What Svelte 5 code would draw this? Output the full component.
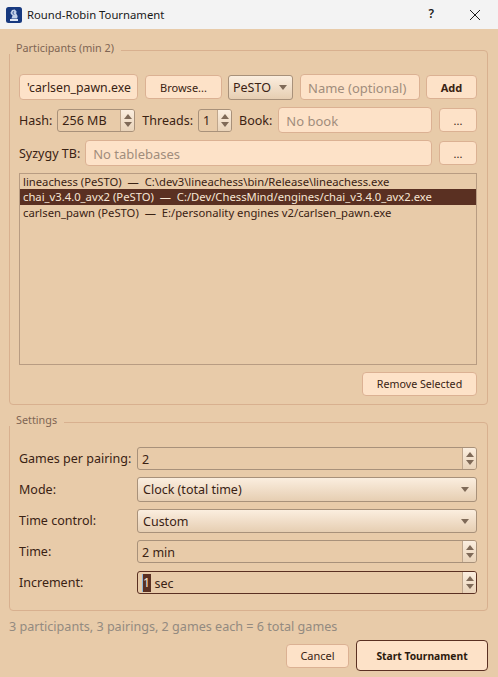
<script>
  const engines = [
    { name: 'lineachess (PeSTO)', path: 'C:\\dev3\\lineachess\\bin/Release\\lineachess.exe' },
    { name: 'chai_v3.4.0_avx2 (PeSTO)', path: 'C:/Dev/ChessMind/engines/chai_v3.4.0_avx2.exe', selected: true },
    { name: 'carlsen_pawn (PeSTO)', path: 'E:/personality engines v2/carlsen_pawn.exe' }
  ];
</script>

{#snippet arrows()}
  <span class="arrows">
    <span class="up"></span>
    <span class="down"></span>
  </span>
{/snippet}

<div class="window">
  <header class="titlebar">
    <svg class="appicon" viewBox="0 0 16 16" width="16" height="16">
      <rect width="16" height="16" rx="2.5" fill="#17397f" />
      <path d="M6 3 8.8 2.4 10.6 4.4 10.2 6.4 11.6 9 11.2 11.4 5.4 11.4 6.6 8.6 5.4 7.6 4.4 6 Z" fill="#c3d1e8" />
      <path d="M7.8 4.2 6.8 6 8.2 7.8" fill="none" stroke="#17397f" stroke-width=".8" />
      <path d="M4 12H12V14H4Z" fill="#dfe7f3" />
    </svg>
    <span class="title">Round-Robin Tournament</span>
    <span class="help">?</span>
    <svg class="close" viewBox="0 0 10 10" width="10" height="10">
      <path d="M0 0 10 10M10 0 0 10" stroke="#1c1c1c" stroke-width="1" fill="none" />
    </svg>
  </header>

  <main class="content">
    <section class="group participants">
      <h2 class="legend">Participants (min 2)</h2>

      <div class="row first">
        <div class="field path">'carlsen_pawn.exe</div>
        <button class="btn browse">Browse...</button>
        <div class="combo small"><span>PeSTO</span><span class="caret"></span></div>
        <div class="field name placeholder">Name (optional)</div>
        <button class="btn add">Add</button>
      </div>

      <div class="row second">
        <span class="label">Hash:</span>
        <div class="spin hash"><span class="val">256 MB</span>{@render arrows()}</div>
        <span class="label threads">Threads:</span>
        <div class="spin thr"><span class="val">1</span>{@render arrows()}</div>
        <span class="label book">Book:</span>
        <div class="field grow placeholder">No book</div>
        <button class="btn dots">...</button>
      </div>

      <div class="row third">
        <span class="label">Syzygy TB:</span>
        <div class="field grow placeholder">No tablebases</div>
        <button class="btn dots">...</button>
      </div>

      <ul class="list">
        {#each engines as e}
          <li class:selected={e.selected}>{e.name}&nbsp; — &nbsp;{e.path}</li>
        {/each}
      </ul>

      <div class="remove-row">
        <button class="btn remove">Remove Selected</button>
      </div>
    </section>

    <section class="group settings">
      <h2 class="legend">Settings</h2>
      <div class="form">
        <span class="label">Games per pairing:</span>
        <div class="spin wide"><span class="val">2</span>{@render arrows()}</div>

        <span class="label">Mode:</span>
        <div class="combo wide"><span>Clock (total time)</span><span class="caret"></span></div>

        <span class="label">Time control:</span>
        <div class="combo wide"><span>Custom</span><span class="caret"></span></div>

        <span class="label">Time:</span>
        <div class="spin wide"><span class="val">2 min</span>{@render arrows()}</div>

        <span class="label last">Increment:</span>
        <div class="spin wide focus last"><span class="val"><span class="sel">1</span> sec</span>{@render arrows()}</div>
      </div>
    </section>

    <p class="status">3 participants, 3 pairings, 2 games each = 6 total games</p>

    <div class="actions">
      <button class="btn cancel">Cancel</button>
      <button class="btn start">Start Tournament</button>
    </div>
  </main>
</div>

<style>
  :global(body) {
    margin: 0;
    background: #e8cba9;
  }

  .window {
    width: 498px;
    height: 677px;
    overflow: hidden;
    font-family: "Noto Sans", sans-serif;
    font-size: 12.5px;
    color: #3a2213;
  }

  .titlebar {
    height: 29px;
    background: #f3f3f3;
    display: flex;
    align-items: center;
    padding-left: 6px;
    color: #1a1a1a;
    font-size: 11.3px;
  }

  .appicon {
    margin-right: 5px;
  }

  .title {
    flex: 1;
  }

  .help {
    font-weight: 600;
    font-size: 12px;
    margin: -3px 36px 0 0;
  }

  .close {
    margin-right: 18px;
  }

  .content {
    padding: 21px 10px 0 9px;
  }

  .group {
    position: relative;
    border: 1px solid #d8b08f;
    border-radius: 4px;
    padding: 0 10px 0 9px;
  }

  .legend {
    position: absolute;
    left: -1px;
    top: -10px;
    margin: 0;
    padding: 0 7px;
    background: #e8cba9;
    font-size: 10.8px;
    line-height: 13px;
    height: 13px;
    font-weight: 400;
    color: #7f6553;
  }

  .participants {
    height: 355px;
    padding-top: 23px;
    box-sizing: border-box;
  }

  .row {
    display: flex;
    align-items: center;
  }

  .first {
    height: 26px;
  }

  .second {
    height: 26px;
    margin-top: 7px;
  }

  .third {
    height: 26px;
    margin-top: 7px;
  }

  .field {
    height: 26px;
    box-sizing: border-box;
    background: #fde2c8;
    border: 1px solid #dbb193;
    border-radius: 4px;
    padding: 1px 7px 0;
    display: flex;
    align-items: center;
    white-space: nowrap;
    font-size: 13px;
  }

  .placeholder {
    color: #a18d7c;
  }

  .grow {
    flex: 1;
  }

  .path {
    width: 119px;
    font-size: 12.3px;
  }

  .name {
    width: 120px;
    margin-right: 6px;
  }

  .btn {
    height: 24px;
    box-sizing: border-box;
    background: #fde2c8;
    border: 1px solid #dbb193;
    border-radius: 4px;
    padding: 0;
    font: inherit;
    font-size: 11px;
    color: #3a2213;
  }

  .browse {
    width: 77px;
    margin: 0 6px 0 7px;
  }

  .add {
    width: 51px;
    font-weight: 700;
  }

  .dots {
    width: 38px;
    margin-left: 7px;
  }

  .combo {
    height: 25px;
    box-sizing: border-box;
    display: flex;
    align-items: center;
    justify-content: space-between;
    padding: 1px 7px 0 5px;
    border: 1px solid #a8917a;
    border-radius: 3px;
    background: linear-gradient(#fbeedf, #e6ceb2);
  }

  .small {
    width: 65px;
    margin-right: 7px;
    padding-left: 4px;
    padding-right: 5px;
  }

  .caret {
    width: 0;
    height: 0;
    border-left: 4px solid transparent;
    border-right: 4px solid transparent;
    border-top: 5px solid #7f6a58;
  }

  .spin {
    height: 23px;
    box-sizing: border-box;
    display: flex;
    align-items: stretch;
    border: 1px solid #a8917a;
    border-radius: 3px;
    overflow: hidden;
  }

  .val {
    flex: 1;
    padding: 1px 0 0 4px;
    display: flex;
    align-items: center;
    white-space: pre;
  }

  .arrows {
    width: 13px;
    background: linear-gradient(#fbeedf, #e9d3b9);
    border-left: 1px solid #bfa68c;
    display: flex;
    flex-direction: column;
    align-items: center;
    justify-content: center;
    gap: 3px;
  }

  .up,
  .down {
    width: 0;
    height: 0;
    border-left: 4px solid transparent;
    border-right: 4px solid transparent;
  }

  .up {
    border-bottom: 5px solid #7f6a58;
  }

  .down {
    border-top: 5px solid #7f6a58;
  }

  .label {
    white-space: nowrap;
  }

  .second > .label,
  .third > .label {
    padding-top: 1px;
  }

  .hash {
    width: 78px;
    margin-left: 5px;
  }

  .threads {
    margin-left: 7px;
  }

  .thr {
    width: 34px;
    margin-left: 5px;
  }

  .book {
    margin: 0 6px 0 7px;
  }

  .third .field {
    margin-left: 5px;
  }

  .list {
    list-style: none;
    margin: 7px 0 0;
    padding: 0;
    height: 192px;
    box-sizing: border-box;
    border: 1px solid #b89c82;
    font-size: 11.25px;
  }

  .list li {
    height: 15.3px;
    line-height: 15.3px;
    padding-left: 3px;
    white-space: nowrap;
  }

  .list .selected {
    background: #5a3022;
    color: #f7e6d4;
  }

  .remove-row {
    display: flex;
    justify-content: flex-end;
    margin-top: 7px;
  }

  .remove {
    width: 115px;
    font-size: 10.7px;
    padding-bottom: 1px;
  }

  .settings {
    margin-top: 17px;
    padding-top: 24px;
    padding-bottom: 16px;
  }

  .form {
    display: grid;
    grid-template-columns: 118px 1fr;
    row-gap: 7px;
    align-items: center;
  }

  .form .combo {
    height: 24.5px;
  }

  .form .last {
    margin-top: 1px;
  }

  .wide {
    width: 100%;
  }

  .focus {
    border-color: #5a3022;
  }

  .sel {
    display: inline-block;
    height: 18px;
    line-height: 18px;
    background: #5a3022;
    color: #f7e6d4;
    padding: 0 1px 0 0;
    border-left: 1px solid #8fb7d8;
  }

  .status {
    margin: 7px 0 0;
    color: #938a80;
    font-size: 12.6px;
    line-height: 17px;
  }

  .actions {
    display: flex;
    justify-content: flex-end;
    align-items: center;
    gap: 7px;
    margin-top: 5px;
  }

  .cancel {
    width: 63px;
  }

  .start {
    width: 132px;
    height: 31px;
    font-size: 10.3px;
    font-weight: 700;
    border-color: #5a3022;
    color: #2b1a0e;
  }
</style>
